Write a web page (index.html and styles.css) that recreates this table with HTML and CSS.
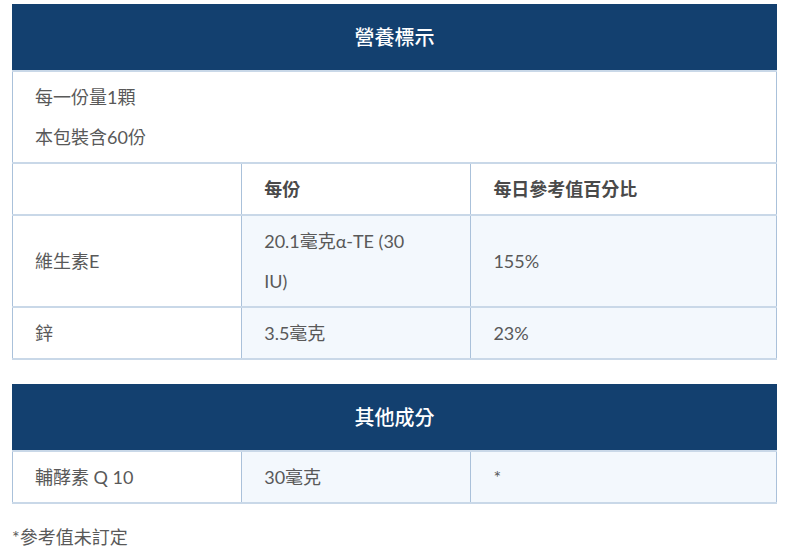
FILE: index.html
```html
<!DOCTYPE html>
<html lang="zh-Hant">
<head>
<meta charset="utf-8">
<title>營養標示</title>
<link rel="stylesheet" href="styles.css">
</head>
<body>
<main class="page">
  <table class="nutri">
    <colgroup><col class="c1"><col class="c2"><col class="c3"></colgroup>
    <thead>
      <tr><th colspan="3" class="title">營養標示</th></tr>
    </thead>
    <tbody>
      <tr><td colspan="3" class="intro">每一份量1顆<br>本包裝含60份</td></tr>
      <tr class="colhead"><td></td><td>每份</td><td>每日參考值百分比</td></tr>
      <tr class="data"><td>維生素E</td><td>20.1毫克α-TE (30<br>IU)</td><td>155%</td></tr>
      <tr class="data"><td>鋅</td><td>3.5毫克</td><td>23%</td></tr>
    </tbody>
  </table>

  <table class="nutri second">
    <colgroup><col class="c1"><col class="c2"><col class="c3"></colgroup>
    <thead>
      <tr><th colspan="3" class="title">其他成分</th></tr>
    </thead>
    <tbody>
      <tr class="data"><td>輔酵素 Q 10</td><td>30毫克</td><td>*</td></tr>
    </tbody>
  </table>

  <p class="note">*參考值未訂定</p>
</main>
</body>
</html>
```

FILE: styles.css
```css
html, body {
  margin: 0;
  padding: 0;
  background: #ffffff;
}

body {
  font-family: Lato, "Noto Sans CJK TC", "Noto Sans", sans-serif;
  font-size: 18px;
  color: #595959;
}

.page {
  padding: 4px 17px 0 12px;
}

.nutri {
  width: 765px;
  border-collapse: collapse;
  table-layout: fixed;
}

.nutri .c1, .nutri .c2 { width: 30%; }
.nutri .c3 { width: 40%; }

.second {
  margin-top: 24px;
}

.title {
  background: #13406f;
  color: #ffffff;
  font-size: 20px;
  font-weight: 500;
  line-height: 40px;
  padding: 13px 22px;
  text-align: center;
  border-bottom: 2px solid #c9d8e8;
  border-left: 1px solid #13406f;
  border-right: 1px solid #13406f;
}

.nutri td {
  line-height: 40px;
  padding: 5px 22px;
  text-align: left;
  vertical-align: middle;
  border-bottom: 2px solid #c9d8e8;
  border-left: 1px solid #aac1da;
  border-right: 1px solid #aac1da;
  background: #ffffff;
}

.nutri .data td + td {
  background: #f3f8fd;
}

.colhead td {
  font-weight: 700;
  color: #4a4a4a;
}

.note {
  margin: 13px 0 0;
  line-height: 40px;
}
```
